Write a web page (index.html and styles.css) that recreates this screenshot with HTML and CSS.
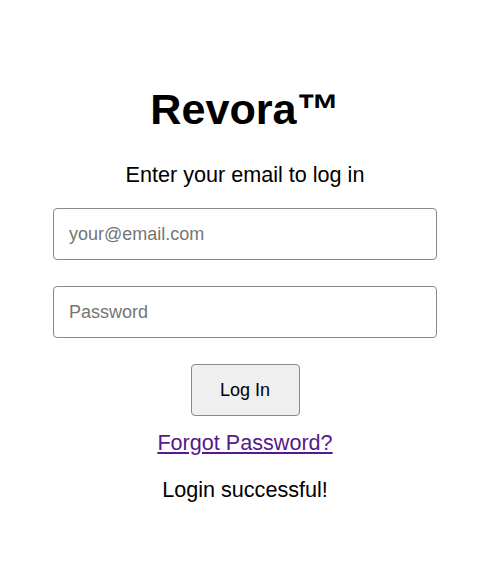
FILE: index.html
```html
<!DOCTYPE html>
<html lang="en">
<head>
<meta charset="utf-8">
<title>Revora Login</title>
<link rel="stylesheet" href="styles.css">
</head>
<body>
<main class="screen">
  <h1 class="brand">Revora™</h1>
  <p class="subtitle">Enter your email to log in</p>
  <form class="login-form" onsubmit="return false">
    <input class="field" type="email" placeholder="your@email.com">
    <input class="field" type="password" placeholder="Password">
    <button class="btn" type="submit">Log In</button>
  </form>
  <a class="forgot" href="#">Forgot Password?</a>
  <p class="status">Login successful!</p>
</main>
</body>
</html>
```

FILE: styles.css
```css
html, body {
  margin: 0;
  padding: 0;
  background: #ffffff;
}

body {
  font-family: "Liberation Sans", Arial, sans-serif;
  color: #000000;
  font-size: 21.6px;
}

.screen {
  width: 490px;
  display: flex;
  flex-direction: column;
  align-items: center;
  padding-top: 84px;
}

.brand {
  margin: 0;
  font-size: 43.2px;
  font-weight: bold;
  line-height: 50px;
}

.subtitle {
  margin: 28px 0 0;
  font-size: 21.6px;
  line-height: 25px;
}

.login-form {
  margin-top: 21px;
  display: flex;
  flex-direction: column;
  align-items: center;
  gap: 26px;
}

.field {
  box-sizing: border-box;
  width: 384px;
  height: 52px;
  padding: 0 15px;
  border: 1px solid #8a8a8a;
  border-radius: 4px;
  font-family: "Liberation Sans", Arial, sans-serif;
  font-size: 18px;
  color: #000;
  background: #fff;
  outline: none;
}

.field::placeholder {
  color: #757575;
}

.btn {
  box-sizing: border-box;
  width: 109px;
  height: 52px;
  padding: 0;
  border: 1px solid #8a8a8a;
  border-radius: 4px;
  background: #efefef;
  font-family: "Liberation Sans", Arial, sans-serif;
  font-size: 18px;
  color: #000;
}

.forgot {
  margin-top: 14px;
  font-size: 21.6px;
  line-height: 25px;
  color: #551a8b;
  text-decoration: underline;
}

.status {
  margin: 22px 0 0;
  font-size: 21.6px;
  line-height: 25px;
}
```
